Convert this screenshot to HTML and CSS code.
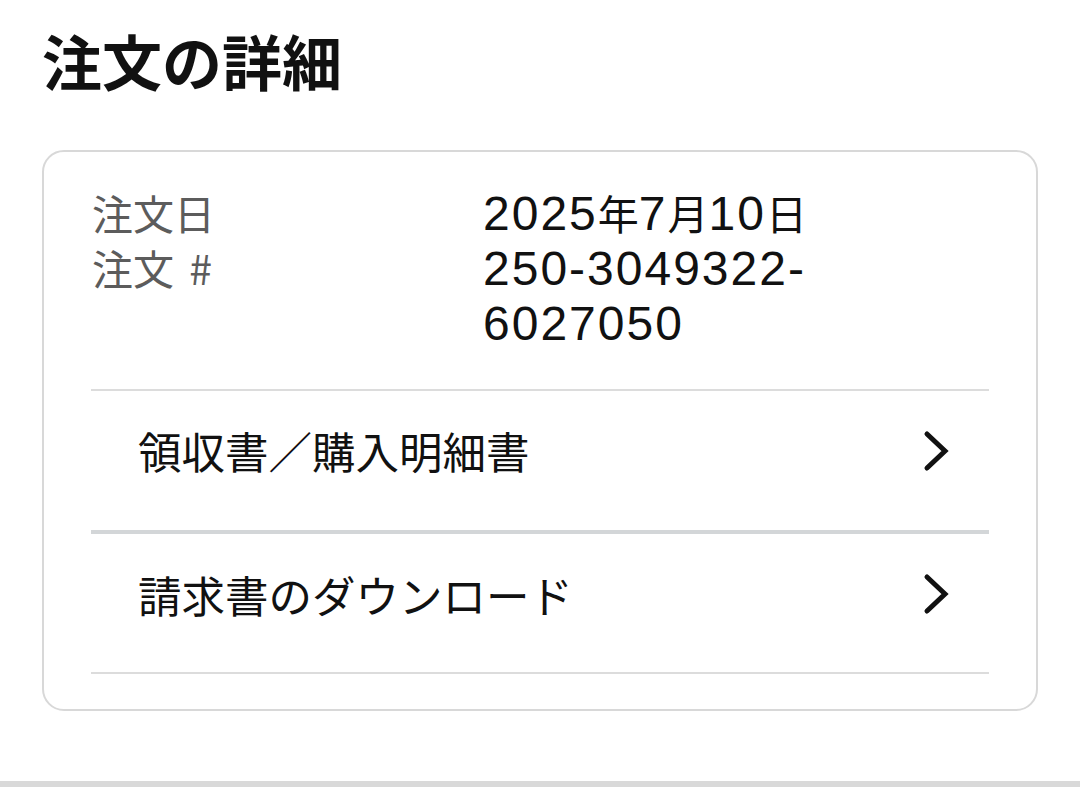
FILE: index.html
```html
<!DOCTYPE html>
<html lang="ja">
<head>
<meta charset="utf-8">
<link rel="stylesheet" href="styles.css">
</head>
<body>
<div class="page">
  <h1 class="title">注文の詳細</h1>
  <section class="card">
    <div class="info">
      <div class="labels">
        <div>注文日</div>
        <div>注文 <span class="hash">#</span></div>
      </div>
      <div class="values">
        <div>2025<span class="cj">年</span>7<span class="cj">月</span>10<span class="cj">日</span></div>
        <div>250-3049322-<br>6027050</div>
      </div>
    </div>
    <div class="divider"></div>
    <a class="row">
      <span class="row-text">領収書／購入明細書</span>
      <svg class="chev" width="26" height="42" viewBox="0 0 26 42"><polyline points="4,4 22,21 4,38" fill="none" stroke="#111" stroke-width="5" stroke-linecap="round" stroke-linejoin="miter"/></svg>
    </a>
    <div class="divider thick"></div>
    <a class="row second">
      <span class="row-text">請求書のダウンロード</span>
      <svg class="chev" width="26" height="42" viewBox="0 0 26 42"><polyline points="4,4 22,21 4,38" fill="none" stroke="#111" stroke-width="5" stroke-linecap="round" stroke-linejoin="miter"/></svg>
    </a>
    <div class="divider"></div>
  </section>
  <div class="bottom-bar"></div>
</div>
</body>
</html>
```

FILE: styles.css
```css
html, body {
  margin: 0;
  padding: 0;
  background: #ffffff;
}
body {
  font-family: "Noto Sans CJK JP", "Noto Sans", sans-serif;
  color: #111;
}
.page {
  padding-top: 24px;
}
.title {
  margin: 0 0 54px 42px;
  font-size: 60px;
  line-height: 72px;
  font-weight: 700;
  color: #111;
}
.card {
  margin: 0 42px;
  border: 2px solid #d8d8d8;
  border-radius: 22px;
  padding: 33px 47px 35px 47px;
}
.info {
  display: grid;
  grid-template-columns: 392px 1fr;
  padding-bottom: 38px;
}
.labels {
  font-size: 41px;
  line-height: 55px;
  color: #5c5c5c;
  padding-left: 1px;
}
.hash {
  margin-left: 6px;
}
.values {
  font-family: "Liberation Sans", "Noto Sans CJK JP", sans-serif;
  font-size: 48px;
  line-height: 55px;
  color: #111;
  letter-spacing: 2px;
}
.values .cj {
  font-family: "Noto Sans CJK JP", sans-serif;
  font-size: 41px;
  letter-spacing: 0;
}
.divider {
  height: 2px;
  background: #dcdcdc;
}
.divider.thick {
  height: 4px;
  background: #d3d6d8;
}
.row {
  display: flex;
  align-items: center;
  justify-content: space-between;
  height: 139px;
  padding: 0 40px 20px 47px;
  box-sizing: border-box;
}
.row.second {
  height: 138px;
  padding-bottom: 18px;
}
.row-text {
  font-size: 43.5px;
  line-height: 55px;
  color: #111;
}
.chev {
  display: block;
}
.bottom-bar {
  margin-top: 70px;
  height: 6px;
  background: #d9d9d9;
}
```
